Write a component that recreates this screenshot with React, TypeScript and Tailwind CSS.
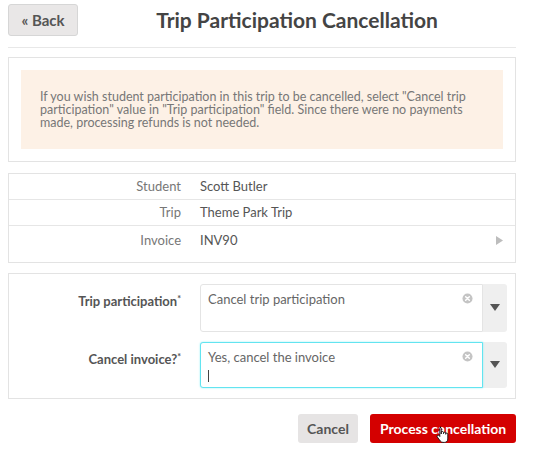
import React from "react";

function ClearIcon() {
  return (
    <svg width="11" height="11" viewBox="0 0 12 12">
      <circle cx="6" cy="6" r="5.5" fill="#c4c4c4" />
      <path d="M4 4 L8 8 M8 4 L4 8" stroke="#fff" strokeWidth="1.6" strokeLinecap="round" />
    </svg>
  );
}

function Caret() {
  return (
    <svg width="10" height="8" viewBox="0 0 10 8">
      <path d="M0 0 H10 L5 7 Z" fill="#555" />
    </svg>
  );
}

function HandCursor() {
  return (
    <svg width="14" height="17" viewBox="0 0 14 17" className="absolute left-[66px] top-[12px]">
      <path
        d="M4 1.2c.7 0 1.2.5 1.2 1.2V8l.1-1.6c0-.6.5-1 1.1-1s1.1.5 1.1 1.1v1.2-.5c0-.6.5-1 1.1-1s1.1.5 1.1 1.1v1-.3c0-.6.5-1 1-1 .6 0 1.100.5 1.1 1.1V13c0 2-1.5 3.4-3.4 3.4H7c-1.2 0-2-.5-2.7-1.4L1.300 11c-.4-.5-.3-1.2.2-1.6.5-.4 1.2-.3 1.6.2l.7.9V2.4c0-.7.5-1.2 1.2-1.2z"
        fill="#fff"
        stroke="#111"
        strokeWidth="0.9"
        strokeLinejoin="round"
      />
    </svg>
  );
}

function InfoRow({ label, value, last, arrow }: { label: string; value: string; last?: boolean; arrow?: boolean }) {
  return (
    <div className={`flex ${last ? "h-[36px] pt-[5px]" : "h-[26px] items-center border-b border-[#e6e6e6]"}`}>
      <div className="w-[172px] text-right text-[13px] text-[#777]">{label}</div>
      <div className="ml-[19px] flex-1 text-[13px] text-[#555]">{value}</div>
      {arrow && (
        <svg width="7" height="9" viewBox="0 0 7 9" className="mr-[12px] mt-[5px]">
          <path d="M0 0 L7 4.5 L0 9 Z" fill="#bdbdbd" />
        </svg>
      )}
    </div>
  );
}

function SelectField({
  label,
  value,
  focused,
  h,
}: {
  label: string;
  value: string;
  focused?: boolean;
  h: string;
}) {
  return (
    <div className="flex">
      <div className="w-[172px] pt-[8px] text-right text-[13px] font-bold text-[#555]">
        {label}
        <span className="text-[9px] align-top">*</span>
      </div>
      <div className={`ml-[19px] flex ${h} w-[307px]`}>
        <div
          className={`relative flex-1 rounded-l-[3px] bg-white px-[7px] pt-[5px] text-[13px] text-[#666] ${
            focused ? "border border-[#62e4f0] shadow-[0_0_2px_#8ef0f8]" : "border border-[#e4e4e4]"
          }`}
        >
          {value}
          {focused && <div className="mt-[2px] h-[12px] w-px bg-[#444]" />}
          <div className="absolute right-[9px] top-[8px]">
            <ClearIcon />
          </div>
        </div>
        <div className="flex w-[24px] items-center justify-center rounded-r-[3px] bg-[#efefef]">
          <Caret />
        </div>
      </div>
    </div>
  );
}

export default function App() {
  return (
    <div
      className="h-[454px] w-[534px] overflow-hidden bg-white px-[8px]"
      style={{ fontFamily: "Lato, 'Open Sans', sans-serif" }}
    >
      <div className="flex w-[508px] items-center pt-[4px]">
        <button className="h-[32px] w-[70px] rounded-[3px] border border-[#d6d6d6] bg-[#e9e7e7] text-[15px] font-bold text-[#555]">
          « Back
        </button>
        <div className="flex-1 text-center text-[21px] font-bold text-[#444]">Trip Participation Cancellation</div>
      </div>
      <div className="mt-[11px] w-[508px] border-t border-[#e8e8e8]" />

      <div className="mt-[9px] w-[508px] border border-[#e3e3e3] px-[12px] py-[12px]">
        <div className="bg-[#fdf1e6] px-[19px] py-[20px] text-[12.5px] leading-[13px] text-[#777]">
          If you wish student participation in this trip to be cancelled, select "Cancel trip participation" value in
          "Trip participation" field. Since there were no payments made, processing refunds is not needed.
        </div>
      </div>

      <div className="mt-[11px] w-[508px] border border-[#e3e3e3]">
        <InfoRow label="Student" value="Scott Butler" />
        <InfoRow label="Trip" value="Theme Park Trip" />
        <InfoRow label="Invoice" value="INV90" last arrow />
      </div>

      <div className="mt-[10px] flex w-[508px] flex-col gap-[10px] border border-[#e3e3e3] pb-[10px] pt-[10px]">
        <SelectField label="Trip participation" value="Cancel trip participation" h="h-[48px]" />
        <SelectField label="Cancel invoice?" value="Yes, cancel the invoice" focused h="h-[46px]" />
      </div>

      <div className="mt-[15px] flex w-[508px] justify-end gap-[12px]">
        <button className="h-[29px] w-[60px] rounded-[3px] bg-[#e6e4e4] text-[14px] font-bold text-[#555]">
          Cancel
        </button>
        <button className="relative h-[29px] w-[146px] rounded-[3px] bg-[#d40000] text-[14px] font-bold text-white">
          Process cancellation
          <HandCursor />
        </button>
      </div>
    </div>
  );
}
